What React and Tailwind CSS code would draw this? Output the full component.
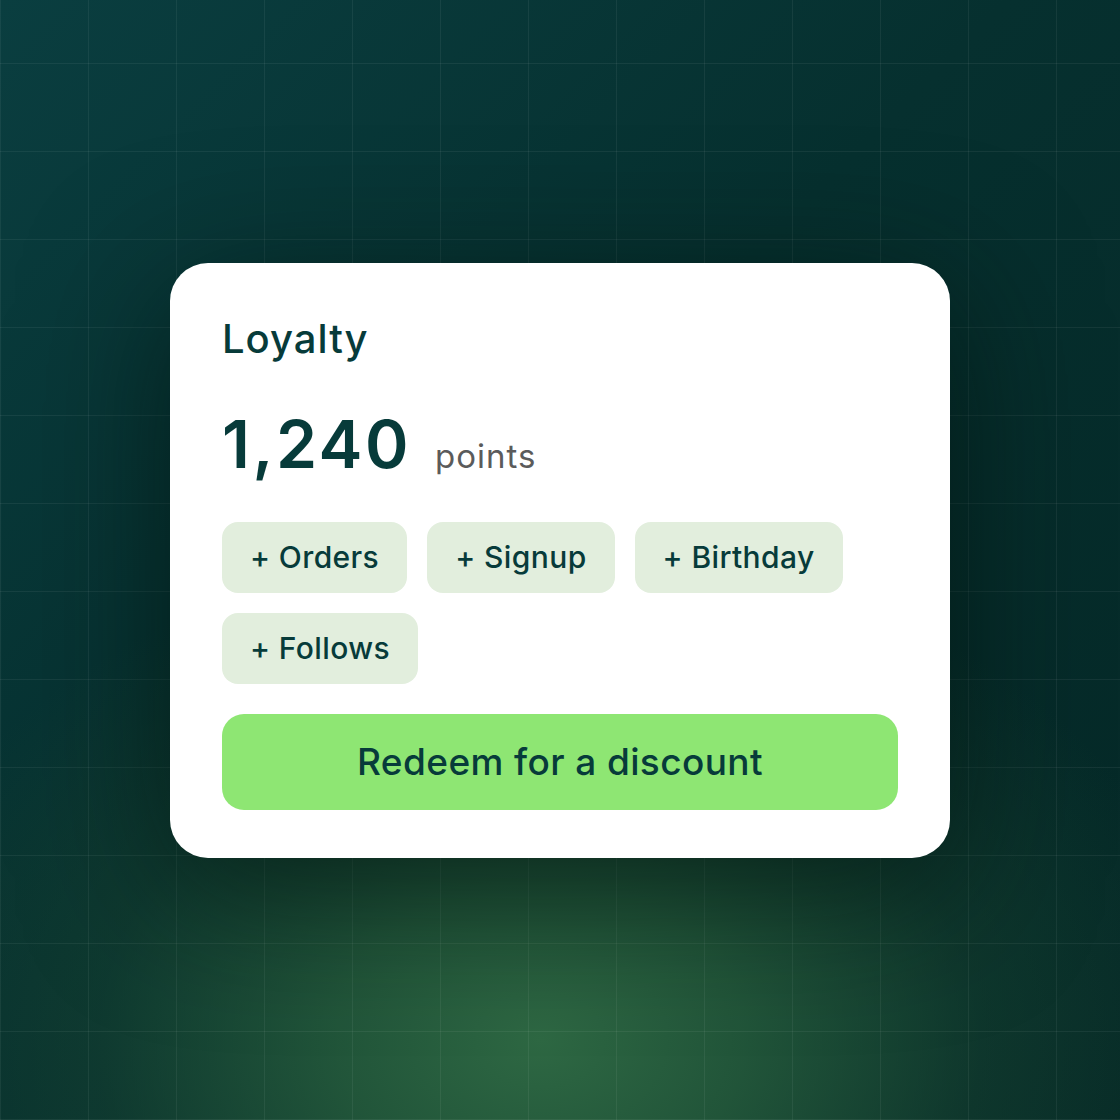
export default function App() {
  const chips = ["+ Orders", "+ Signup", "+ Birthday", "+ Follows"];
  return (
    <div
      className="relative w-[1120px] h-[1120px] overflow-hidden flex items-center justify-center"
      style={{ fontFamily: "Inter, 'Noto Sans', sans-serif" }}
    >
      <div className="absolute inset-0 bg-[linear-gradient(135deg,#0a3e40_0%,#06302f_45%,#052826_100%)]" />
      <div className="absolute inset-0 bg-[radial-gradient(ellipse_680px_500px_at_540px_1040px,rgba(46,104,67,1)_0%,rgba(38,92,60,0.85)_30%,rgba(25,70,50,0.45)_65%,rgba(20,60,45,0)_100%)]" />
      <div className="absolute inset-0 bg-[linear-gradient(to_right,rgba(255,255,255,0.06)_1px,transparent_1px),linear-gradient(to_bottom,rgba(255,255,255,0.06)_1px,transparent_1px)] bg-[size:88px_88px] bg-[position:0px_-25px]" />
      <div className="relative w-[780px] bg-white rounded-[38px] px-[52px] pt-[52px] pb-[48px] shadow-[0_30px_140px_rgba(0,18,14,0.65)] flex flex-col text-[#073b3a]">
        <div className="text-[40px] leading-[48px] font-medium tracking-[1px]">Loyalty</div>
        <div className="mt-[48px] flex items-baseline h-[66px] leading-[66px]">
          <span className="text-[66px] font-semibold tracking-[2.5px]">1,240</span>
          <span className="ml-[24px] text-[33px] text-[#5b5b5b] tracking-[1px]">points</span>
        </div>
        <div className="mt-[45px] flex flex-wrap gap-[20px] w-[640px]">
          {chips.map((c) => (
            <div
              key={c}
              className="h-[71px] px-[28px] rounded-[16px] bg-[#e2eedd] flex items-center text-[30px] font-medium tracking-[0.4px]"
            >
              {c}
            </div>
          ))}
        </div>
        <button className="mt-[30px] h-[96px] w-full rounded-[22px] bg-[#8ee673] text-[37px] font-medium text-[#073b3a] tracking-[0.4px]">
          Redeem for a discount
        </button>
      </div>
    </div>
  );
}
